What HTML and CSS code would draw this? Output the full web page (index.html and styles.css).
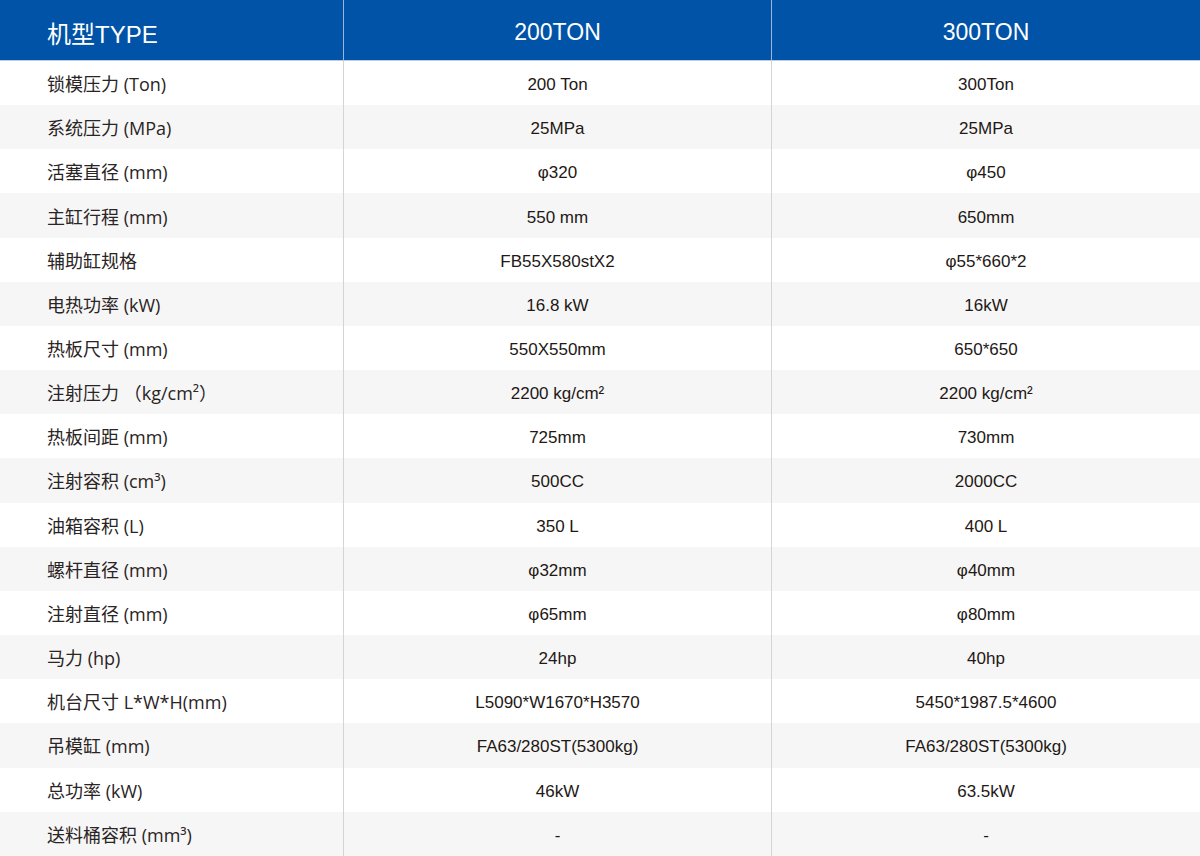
FILE: index.html
```html
<!DOCTYPE html>
<html lang="zh-CN">
<head>
<meta charset="utf-8">
<title>机型参数</title>
<link rel="stylesheet" href="styles.css">
</head>
<body>
<div class="spec">
  <div class="row head">
    <div class="cell name">机型TYPE</div>
    <div class="cell val">200TON</div>
    <div class="cell val">300TON</div>
  </div>
  <div class="row"><div class="cell name">锁模压力 (Ton)</div><div class="cell val">200 Ton</div><div class="cell val">300Ton</div></div>
  <div class="row"><div class="cell name">系统压力 (MPa)</div><div class="cell val">25MPa</div><div class="cell val">25MPa</div></div>
  <div class="row"><div class="cell name">活塞直径 (mm)</div><div class="cell val">φ320</div><div class="cell val">φ450</div></div>
  <div class="row"><div class="cell name">主缸行程 (mm)</div><div class="cell val">550 mm</div><div class="cell val">650mm</div></div>
  <div class="row"><div class="cell name">辅助缸规格</div><div class="cell val">FB55X580stX2</div><div class="cell val">φ55*660*2</div></div>
  <div class="row"><div class="cell name">电热功率 (kW)</div><div class="cell val">16.8 kW</div><div class="cell val">16kW</div></div>
  <div class="row"><div class="cell name">热板尺寸 (mm)</div><div class="cell val">550X550mm</div><div class="cell val">650*650</div></div>
  <div class="row"><div class="cell name">注射压力 （kg/cm²）</div><div class="cell val">2200 kg/cm²</div><div class="cell val">2200 kg/cm²</div></div>
  <div class="row"><div class="cell name">热板间距 (mm)</div><div class="cell val">725mm</div><div class="cell val">730mm</div></div>
  <div class="row"><div class="cell name">注射容积 (cm³)</div><div class="cell val">500CC</div><div class="cell val">2000CC</div></div>
  <div class="row"><div class="cell name">油箱容积 (L)</div><div class="cell val">350 L</div><div class="cell val">400 L</div></div>
  <div class="row"><div class="cell name">螺杆直径 (mm)</div><div class="cell val">φ32mm</div><div class="cell val">φ40mm</div></div>
  <div class="row"><div class="cell name">注射直径 (mm)</div><div class="cell val">φ65mm</div><div class="cell val">φ80mm</div></div>
  <div class="row"><div class="cell name">马力 (hp)</div><div class="cell val">24hp</div><div class="cell val">40hp</div></div>
  <div class="row"><div class="cell name">机台尺寸 L*W*H(mm)</div><div class="cell val">L5090*W1670*H3570</div><div class="cell val">5450*1987.5*4600</div></div>
  <div class="row"><div class="cell name">吊模缸 (mm)</div><div class="cell val">FA63/280ST(5300kg)</div><div class="cell val">FA63/280ST(5300kg)</div></div>
  <div class="row"><div class="cell name">总功率 (kW)</div><div class="cell val">46kW</div><div class="cell val">63.5kW</div></div>
  <div class="row"><div class="cell name">送料桶容积 (mm³)</div><div class="cell val">-</div><div class="cell val">-</div></div>
</div>
</body>
</html>
```

FILE: styles.css
```css
html, body {
  margin: 0;
  padding: 0;
  background: #ffffff;
}

.spec {
  width: 1200px;
  display: flex;
  flex-direction: column;
}

.row {
  display: grid;
  grid-template-columns: 344px 428px 428px;
  height: 44.16px;
  background: #ffffff;
}

.row:nth-child(odd) {
  background: #f6f6f6;
}

.cell {
  display: flex;
  align-items: center;
  box-sizing: border-box;
  color: #231815;
}

.cell:not(:last-child) {
  border-right: 1px solid #d4d4d4;
}

.name {
  padding-left: 47px;
  font-family: "Open Sans", "Noto Sans CJK SC", sans-serif;
  font-size: 18px;
  color: #2a2424;
}

.val {
  justify-content: center;
  font-family: "Liberation Sans", Arial, sans-serif;
  font-size: 17px;
  padding-top: 4px;
}

.row.head {
  height: 61px;
  background: #0053a6;
  border-bottom: 1px solid #b9cde6;
  box-sizing: border-box;
}

.head .cell {
  color: #ffffff;
  padding-top: 5px;
}

.head .cell:not(:last-child) {
  border-right: 1px solid #9bb5d8;
}

.head .name {
  font-size: 24px;
  font-family: "Liberation Sans", "Noto Sans CJK SC", sans-serif;
}

.head .val {
  font-size: 23px;
  font-family: "Liberation Sans", Arial, sans-serif;
}
```
